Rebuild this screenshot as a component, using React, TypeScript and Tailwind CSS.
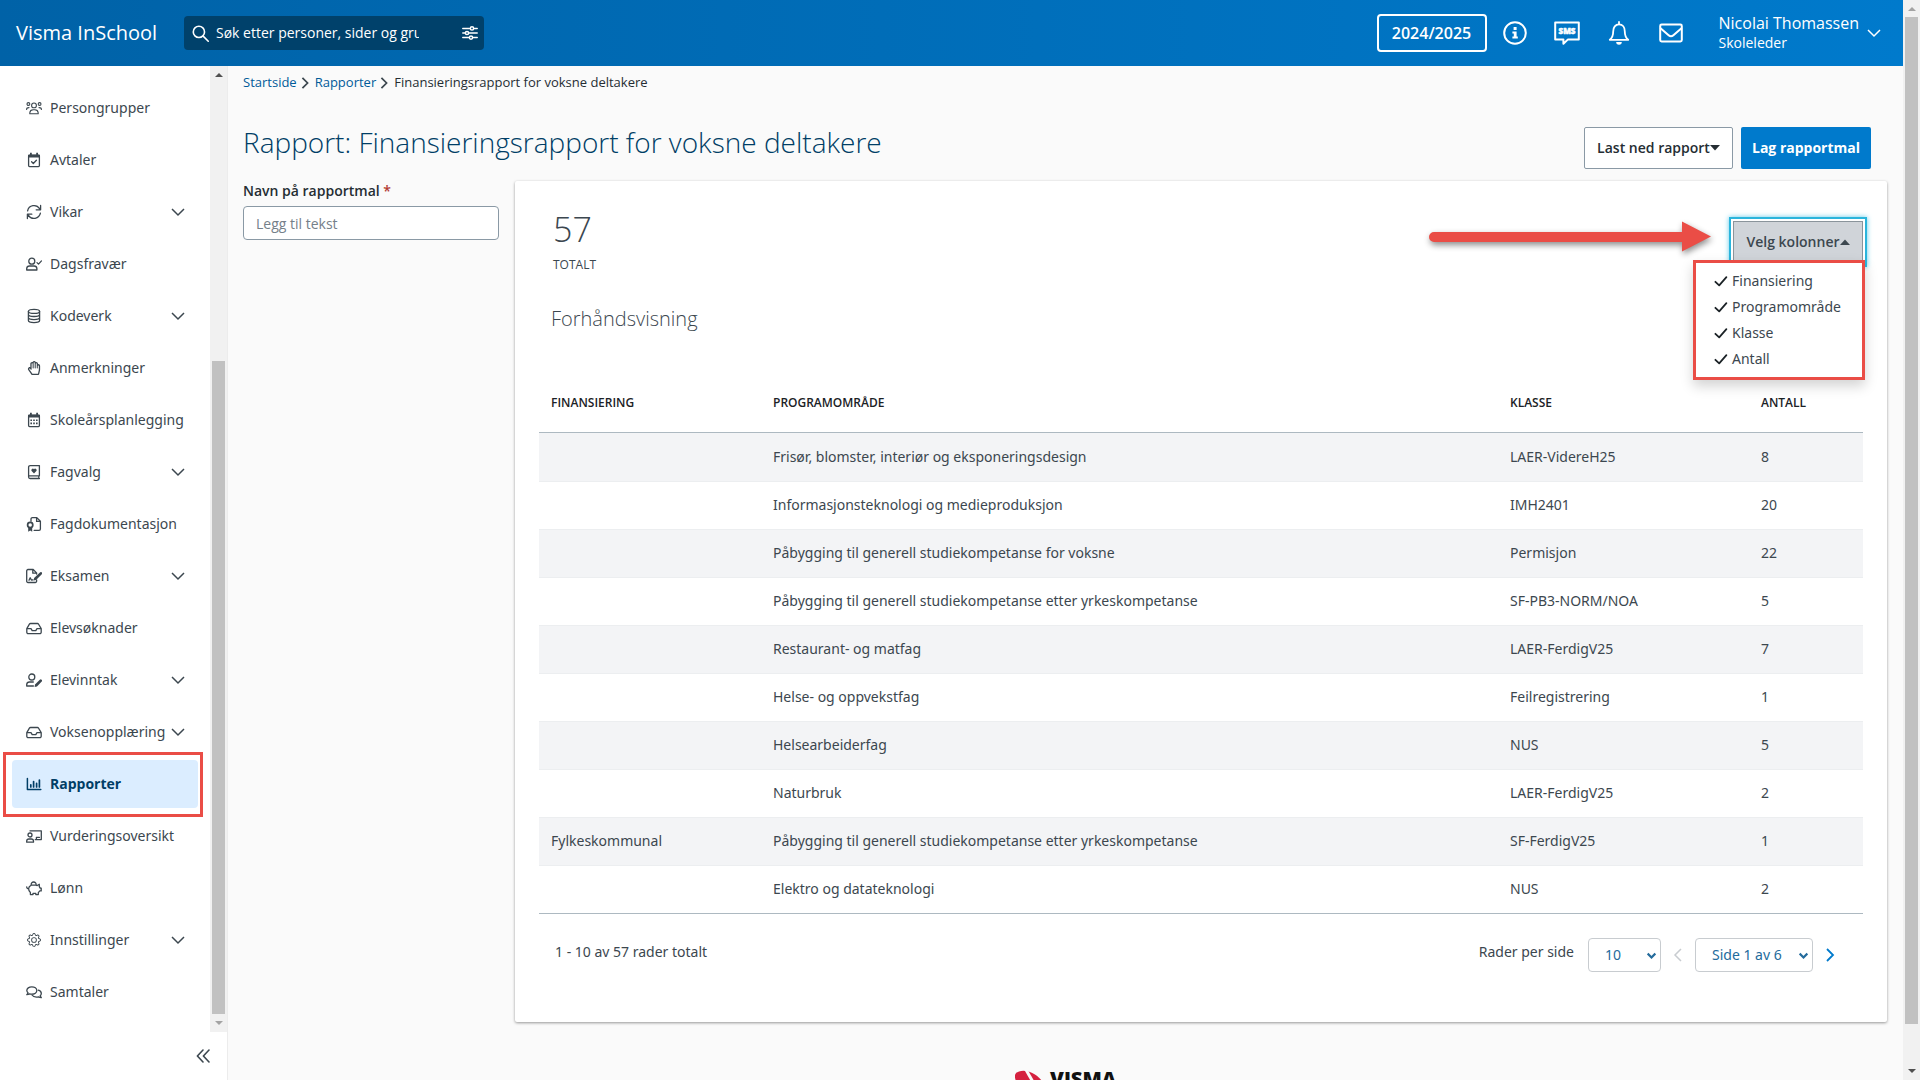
import React, { useState } from 'react';
import { FaRegHandPaper } from 'react-icons/fa';
import { BsGear } from 'react-icons/bs';

type IconProps = { children: React.ReactNode; w?: number; box?: string; sw?: number; className?: string };

function Svg({ children, w = 16, box = '0 0 16 16', sw = 1.3, className = '' }: IconProps) {
  return (
    <svg width={w} height={w} viewBox={box} fill="none" stroke="currentColor" strokeWidth={sw} strokeLinecap="round" strokeLinejoin="round" className={className} aria-hidden="true">
      {children}
    </svg>
  );
}

const Solid = ({ d }: { d: string }) => <path d={d} fill="currentColor" stroke="none" />;

const icons = {
  group: (
    <Svg sw={1.1}>
      <circle cx="8" cy="5.4" r="2.4" /><circle cx="2.4" cy="4" r="1.4" /><circle cx="13.6" cy="4" r="1.4" />
      <path d="M3.8 13.8v-1a3.4 3.4 0 0 1 3.4-3h1.6a3.4 3.4 0 0 1 3.4 3v1zM.6 9.4c0-1.2.6-1.8 2.4-1.8M15.4 9.4c0-1.2-.6-1.8-2.4-1.8" />
    </Svg>
  ),
  appointment: (
    <Svg>
      <rect x="2.6" y="3.2" width="10.8" height="11.4" rx="1" /><Solid d="M2 2.8h12v2.8H2zM4 .8h1.8v2.6H4zM10.2.8H12v2.6h-1.8z" /><path d="M5.6 9.8l1.7 1.7 3.1-3.3" />
    </Svg>
  ),
  sync: (
    <Svg>
      <path d="M1.6 6.8A6.6 6.6 0 0 1 13.6 4.6M14.6 1.4v4.4h-4.4M14.4 9.2A6.6 6.6 0 0 1 2.4 11.4M1.4 14.6v-4.4h4.4" />
    </Svg>
  ),
  userCheck: (
    <Svg>
      <circle cx="5.8" cy="5.2" r="3" /><path d="M.7 14v-1.4a2.8 2.8 0 0 1 2.8-2.6h4.6a2.8 2.8 0 0 1 2.8 2.6V14zM11 6.6l1.5 1.5 3-3.2" />
    </Svg>
  ),
  database: (
    <Svg>
      <ellipse cx="8" cy="3.4" rx="5.6" ry="2" /><path d="M2.4 3.4v9.2c0 1.1 2.5 2 5.6 2s5.6-.9 5.6-2V3.4M2.4 6.5c0 1.1 2.5 2 5.6 2s5.6-.9 5.6-2M2.4 9.6c0 1.1 2.5 2 5.6 2s5.6-.9 5.6-2" />
    </Svg>
  ),
  hand: <FaRegHandPaper size={14} className="mx-px" />,
  calendar: (
    <Svg>
      <rect x="2.6" y="3.2" width="10.8" height="11.4" rx="1" /><Solid d="M2 2.8h12v2.8H2zM4 .8h1.8v2.6H4zM10.2.8H12v2.6h-1.8zM4.4 7.4h1.6V9H4.4zM7.2 7.4h1.6V9H7.2zM10 7.4h1.6V9H10zM4.4 10.6h1.6v1.6H4.4zM7.2 10.6h1.6v1.6H7.2zM10 10.6h1.6v1.6H10z" />
    </Svg>
  ),
  bookHeart: (
    <Svg>
      <path d="M13.4 11.6V1.6H4.2a1.6 1.6 0 0 0-1.6 1.6v9.8a1.5 1.5 0 0 0 1.5 1.5h9.3M2.8 11.8h10.6M12.8 11.8v2.6" /><Solid d="M8 9.4L5.6 7a1.4 1.4 0 0 1 2.4-1.7A1.4 1.4 0 0 1 10.4 7z" />
    </Svg>
  ),
  award: (
    <Svg>
      <path d="M5 5.2V3a1.4 1.4 0 0 1 1.4-1.4h4.4l3.6 3.6V13a1.4 1.4 0 0 1-1.4 1.4H8.2M10.6 1.8v3.6h3.6" /><circle cx="4.2" cy="9" r="2.6" strokeWidth="1.7" /><Solid d="M2.2 11h4v4.800l-2-1.200-2 1.200z" />
    </Svg>
  ),
  exam: (
    <Svg>
      <path d="M10.600 11.800v1.400a1.300 1.300 0 0 1-1.300 1.300H2A1.300 1.300 0 0 1 .7 13.200V2.800A1.300 1.300 0 0 1 2 1.500h5.200l3.400 3.400v1.200M6.800 1.700v3.500h3.600M3 12.200l1.200-2.400 1.200 2.200 1.600-.2" /><Solid d="M7.600 12.600l.5-2.500 5.800-5.700a1.200 1.200 0 0 1 1.900 1.800l-5.800 5.800z" />
    </Svg>
  ),
  inbox: (
    <Svg>
      <path d="M.8 8.600l2.600-4.400a1.400 1.400 0 0 1 1.200-.7h6.800a1.400 1.400 0 0 1 1.200.7l2.600 4.400v3.600a1.400 1.400 0 0 1-1.400 1.400H2.200a1.400 1.400 0 0 1-1.400-1.400zM.9 8.600H5l1.200 2h3.600l1.200-2h4.100" />
    </Svg>
  ),
  userEdit: (
    <Svg>
      <circle cx="5.800" cy="5" r="3" /><path d="M7.400 14H.7v-1.400A2.800 2.800 0 0 1 3.500 10h3.800" /><Solid d="M8.600 15l.4-2.400 4.800-4.800a1.200 1.200 0 0 1 1.900 1.800L11 14.500z" />
    </Svg>
  ),
  chart: (
    <Svg sw={1.5}>
      <path d="M1.400 2.600v11h13.400" /><path d="M4.800 11V8.800M7.600 11V5.600M10.600 11V7.400M13.400 11V4" strokeWidth="1.700" />
    </Svg>
  ),
  teacher: (
    <Svg>
      <circle cx="4" cy="7" r="2" /><path d="M.7 14.200v-1.100a2.200 2.200 0 0 1 2.200-2.100h2.400a2.200 2.200 0 0 1 2.200 2.100v1.100zM4 2.800h11.300v8.800H9.200M10.400 11.400v-2h3" />
    </Svg>
  ),
  piggy: (
    <Svg>
      <path d="M5 5.200h4.800l1.400.3 2.100-1.200v2.300l.9 1.500h1v2.800h-1.400l-1.500 1.700v2H9.800v-1.300H7v1.300H4.400v-2.200A4.600 4.600 0 0 1 2.600 8.600C1.400 8.600.7 8 .7 6.800M2.700 8.400A3.600 3.600 0 0 1 5 5.300M5.200 5a2.500 2.500 0 1 1 4.900 0" />
    </Svg>
  ),
  gear: <BsGear size={14} className="mx-px" />,
  chats: (
    <Svg>
      <path d="M5.800 2.800c2.800 0 5 1.600 5 3.700s-2.200 3.700-5 3.700c-.8 0-1.500-.1-2.100-.4-.7.500-1.700.9-2.900.9.600-.6 1-1.300 1.200-2A3.300 3.300 0 0 1 .8 6.500c0-2.100 2.200-3.700 5-3.700z" /><path d="M12.300 6.200c1.800.5 3 1.700 3 3.200 0 .9-.4 1.700-1.100 2.300.2.800.6 1.400 1.100 2-1.200 0-2.200-.4-2.900-.9-.6.200-1.300.3-2 .3-2 0-3.600-.8-4.400-2.100" />
    </Svg>
  ),
};

const menu: { label: string; icon: keyof typeof icons; sub?: boolean; active?: boolean }[] = [
  { label: 'Persongrupper', icon: 'group' },
  { label: 'Avtaler', icon: 'appointment' },
  { label: 'Vikar', icon: 'sync', sub: true },
  { label: 'Dagsfravær', icon: 'userCheck' },
  { label: 'Kodeverk', icon: 'database', sub: true },
  { label: 'Anmerkninger', icon: 'hand' },
  { label: 'Skoleårsplanlegging', icon: 'calendar' },
  { label: 'Fagvalg', icon: 'bookHeart', sub: true },
  { label: 'Fagdokumentasjon', icon: 'award' },
  { label: 'Eksamen', icon: 'exam', sub: true },
  { label: 'Elevsøknader', icon: 'inbox' },
  { label: 'Elevinntak', icon: 'userEdit', sub: true },
  { label: 'Voksenopplæring', icon: 'inbox', sub: true },
  { label: 'Rapporter', icon: 'chart', active: true },
  { label: 'Vurderingsoversikt', icon: 'teacher' },
  { label: 'Lønn', icon: 'piggy' },
  { label: 'Innstillinger', icon: 'gear', sub: true },
  { label: 'Samtaler', icon: 'chats' },
];

const rows = [
  ['', 'Frisør, blomster, interiør og eksponeringsdesign', 'LAER-VidereH25', '8'],
  ['', 'Informasjonsteknologi og medieproduksjon', 'IMH2401', '20'],
  ['', 'Påbygging til generell studiekompetanse for voksne', 'Permisjon', '22'],
  ['', 'Påbygging til generell studiekompetanse etter yrkeskompetanse', 'SF-PB3-NORM/NOA', '5'],
  ['', 'Restaurant- og matfag', 'LAER-FerdigV25', '7'],
  ['', 'Helse- og oppvekstfag', 'Feilregistrering', '1'],
  ['', 'Helsearbeiderfag', 'NUS', '5'],
  ['', 'Naturbruk', 'LAER-FerdigV25', '2'],
  ['Fylkeskommunal', 'Påbygging til generell studiekompetanse etter yrkeskompetanse', 'SF-FerdigV25', '1'],
  ['', 'Elektro og datateknologi', 'NUS', '2'],
];

const Chevron = ({ d, size = 14, sw = 1.5, className = '' }: { d: string; size?: number; sw?: number; className?: string }) => (
  <svg width={size} height={size} viewBox="0 0 14 14" fill="none" stroke="currentColor" strokeWidth={sw} className={className} aria-hidden="true">
    <path d={d} />
  </svg>
);
const DOWN = 'M1 4l6 6 6-6';
const RIGHT = 'M4 1l6 6-6 6';
const LEFT = 'M10 1L4 7l6 6';

const Caret = ({ up }: { up?: boolean }) => (
  <svg width="10" height="6" viewBox="0 0 10 6" aria-hidden="true">
    <path d={up ? 'M0 6l5-5.500L10 6z' : 'M0 0h10L5 5.500z'} fill="currentColor" />
  </svg>
);

const ScrollArrow = ({ up, className }: { up?: boolean; className: string }) => (
  <svg width="8" height="4" viewBox="0 0 8 4" className={className} aria-hidden="true">
    <path d={up ? 'M0 4l4-4 4 4z' : 'M0 0l4 4 4-4z'} fill="currentColor" />
  </svg>
);

function Header() {
  return (
    <header className="flex h-[66px] shrink-0 items-center bg-linear-to-r from-[#0062a7] to-[#007acc] pr-[22px] pl-4 text-white">
      <a href="#" className="w-42 text-xl">Visma InSchool</a>
      <div className="flex h-[34px] w-[300px] items-center rounded bg-[#00416b] pr-1.5 pl-2">
        <Svg w={17} sw={1.5}><circle cx="6.500" cy="6.500" r="5.300" /><path d="M10.500 10.500l4.800 4.800" /></Svg>
        <input aria-label="Søk" placeholder="Søk etter personer, sider og grupper" className="ml-[7px] w-[203px] bg-transparent text-sm text-white outline-none placeholder:text-white" />
        <button aria-label="Filter" className="ml-auto">
          <Svg w={16} sw={1.500}>
            <path d="M.8 3.400H8M12 3.400h3.200M.8 8H3M7 8h8.200M.8 12.600H7M11 12.600h4.200" />
            <circle cx="10" cy="3.400" r="1.600" /><circle cx="5" cy="8" r="1.600" /><circle cx="9" cy="12.600" r="1.600" />
          </Svg>
        </button>
      </div>
      <div className="ml-auto flex items-center">
        <button className="h-[38px] w-[110px] rounded border-2 border-white text-base font-semibold">2024/2025</button>
        <div className="ml-4 flex items-center gap-7">
          <button aria-label="Informasjon">
            <Svg w={24} box="0 0 24 24" sw={2}>
              <circle cx="12" cy="12" r="10.800" />
              <Solid d="M10.600 6h3v3h-3zM9.400 10.400h4.200v5.200h1.200v2H9.400v-2h1.400v-3.200H9.400z" />
            </Svg>
          </button>
          <button aria-label="SMS">
            <svg width="26" height="24" viewBox="0 0 26 24" fill="none" stroke="currentColor" strokeWidth="2" strokeLinejoin="round" aria-hidden="true" className="-mx-px">
              <path d="M1.200 1.400h23.600v17H14L9.400 22.800v-4.400H1.200z" />
              <text x="13" y="13" textAnchor="middle" fontFamily="Open Sans" fontWeight="800" fontSize="8" fill="currentColor" stroke="currentColor" strokeWidth="0.500">SMS</text>
            </svg>
          </button>
          <button aria-label="Varsler">
            <Svg w={24} box="0 0 24 24" sw={1.800}><path d="M2.800 18.800c2.400-2 3.400-4 3.400-8.400 0-4 2.200-7 5.800-7s5.800 3 5.800 7c0 4.400 1 6.400 3.400 8.400zM12 1v2" /><Solid d="M9.200 21h5.600a2.800 2.800 0 0 1-5.600 0z" /></Svg>
          </button>
          <button aria-label="Meldinger">
            <Svg w={24} box="0 0 24 24" sw={2}><rect x="1.200" y="3.600" width="21.600" height="16.800" rx="1.400" /><path d="M1.800 7.400l7.800 6.800a3.600 3.600 0 0 0 4.800 0l7.800-6.800" /></Svg>
          </button>
        </div>
        <button className="ml-9 flex items-center gap-2 text-left">
          <span>
            <span className="block text-base leading-5">Nicolai Thomassen</span>
            <span className="block text-sm leading-5">Skoleleder</span>
          </span>
          <Chevron d={DOWN} />
        </button>
      </div>
    </header>
  );
}

function Sidebar() {
  return (
    <aside className="flex w-[228px] shrink-0 flex-col border-r border-[#ececec] bg-white">
      <div className="flex min-h-0 flex-1">
        <nav className="flex-1 px-3 pt-[18px] text-[#3c474f]">
          <ul className="flex flex-col gap-1">
            {menu.map((m) => (
              <li key={m.label} className="relative">
                <a
                  href="#"
                  className={
                    m.active
                      ? 'flex h-12 w-[186px] items-center rounded bg-[#dbedff] pr-[13px] pl-3.5 text-sm font-bold text-[#003e66]'
                      : "flex h-12 w-[186px] items-center pr-[13px] pl-3.5 font-['Noto_Sans',sans-serif] text-sm"
                  }
                >
                  <span className="mr-2 w-4 shrink-0">{icons[m.icon]}</span>
                  <span className="whitespace-nowrap">{m.label}</span>
                  {m.sub && <Chevron d={DOWN} className="ml-auto shrink-0" />}
                </a>
                {m.active && <div className="pointer-events-none absolute -top-2 -left-[9px] h-[65px] w-[200px] border-3 border-[#ea4d46]" />}
              </li>
            ))}
          </ul>
        </nav>
        <div className="flex w-[17px] flex-col items-center bg-[#f1f1f1]">
          <ScrollArrow up className="mt-[7px] shrink-0 text-[#505050]" />
          <div className="mt-[284px] w-[13px] flex-1 bg-[#c1c1c1]" />
          <ScrollArrow className="my-[7px] shrink-0 text-[#a3a3a3]" />
        </div>
      </div>
      <div className="flex h-12 items-center justify-end pr-[17px] text-[#3c474f]">
        <button aria-label="Skjul meny">
          <Svg w={14} box="0 0 14 14" sw={1.600}><path d="M7 1L1.400 7 7 13M13 1L7.400 7 13 13" /></Svg>
        </button>
      </div>
    </aside>
  );
}

function ColumnPicker() {
  const [open, setOpen] = useState(true);
  return (
    <div className="relative">
      <button onClick={() => setOpen(!open)} className="flex h-[42px] w-[130px] items-center justify-center border border-[#8a949b] bg-[#d0d4d9] text-sm font-semibold text-[#3c474f] shadow-[0_0_0_2px_#fff,0_0_0_4px_#2bb5dc,0_0_5px_4px_#5fc9e8]">
        Velg kolonner<Caret up />
      </button>
      {open && (
        <ul className="absolute top-[39px] -right-0.5 z-10 w-[172px] border-3 border-[#ea4d46] bg-white py-[5px] pl-[18px] font-['Noto_Sans',sans-serif] text-sm text-[#3c474f] shadow-[0_6px_12px_rgba(0,0,0,0.175)]">
          {['Finansiering', 'Programområde', 'Klasse', 'Antall'].map((c) => (
            <li key={c}>
              <button className="flex h-[26px] items-center gap-1">
                <Svg w={14} box="0 0 14 14" sw={1.800} className="text-[#1b2226]"><path d="M1.400 7.800l3.800 3.600 7.200-8.200" /></Svg>
                {c}
              </button>
            </li>
          ))}
        </ul>
      )}
      <svg width="290" height="44" viewBox="0 0 290 44" className="pointer-events-none absolute top-[-4px] right-[152px] overflow-visible drop-shadow-[1px_3px_3px_rgba(0,0,0,0.45)]" aria-hidden="true">
        <path d="M13 15H261V4.500L290 19.500 261 34.500V25H13a5 5 0 0 1 0-10z" fill="#ea4d46" />
      </svg>
    </div>
  );
}

function Pagination() {
  return (
    <div className="mt-6 flex items-start pr-[26px] pl-4 font-['Noto_Sans',sans-serif] text-sm text-[#3c474f]">
      <p className="pt-1">1 - 10 av 57 rader totalt</p>
      <div className="ml-auto flex items-center">
        <label htmlFor="per-page" className="mr-3.5 -mt-1.5">Rader per side</label>
        <div className="relative">
          <select id="per-page" className="h-[34px] w-[73px] appearance-none rounded border border-[#c8ccd0] bg-white pl-4 text-sm text-[#246b9c]"><option>10</option></select>
          <Chevron d={DOWN} size={9} sw={3.500} className="pointer-events-none absolute top-[13px] right-[5px] text-[#246b9c]" />
        </div>
        <button aria-label="Forrige side" disabled className="px-2.5 text-[#c8ccd0]"><Chevron d={LEFT} /></button>
        <div className="relative">
          <select aria-label="Side" className="h-[34px] w-[118px] appearance-none rounded border border-[#c8ccd0] bg-white pl-4 text-sm text-[#246b9c]"><option>Side 1 av 6</option></select>
          <Chevron d={DOWN} size={9} sw={3.500} className="pointer-events-none absolute top-[13px] right-[5px] text-[#246b9c]" />
        </div>
        <button aria-label="Neste side" className="pl-2.5 text-[#007acc]"><Chevron d={RIGHT} sw={1.800} /></button>
      </div>
    </div>
  );
}

const columns = [
  { name: 'Finansiering', width: 'w-[222px]' },
  { name: 'Programområde', width: '' },
  { name: 'Klasse', width: 'w-[251px]' },
  { name: 'Antall', width: 'w-[114px]' },
];

export default function App() {
  return (
    <div className="flex h-screen overflow-hidden bg-[#fafafa] font-['Open_Sans',sans-serif] text-[#3c474f]">
      <div className="flex min-w-0 flex-1 flex-col">
        <Header />
        <div className="flex min-h-0 flex-1">
          <Sidebar />
          <main className="min-w-0 flex-1 pr-4 pl-[15px]">
            <nav aria-label="Brødsmuler" className="flex h-[34px] items-center text-[13px]">
              <a href="#" className="text-[#005b99]">Startside</a>
              <Chevron d={RIGHT} size={12} sw={2} className="mr-1 ml-0.5" />
              <a href="#" className="text-[#005b99]">Rapporter</a>
              <Chevron d={RIGHT} size={12} sw={2} className="mr-1 ml-0.5" />
              <span className="text-[#252d33]">Finansieringsrapport for voksne deltakere</span>
            </nav>
            <div className="mt-[27px] flex h-[42px] items-center justify-between pr-4">
              <h1 className="pb-3 text-[28px] font-light text-[#003e66]">Rapport: Finansieringsrapport for voksne deltakere</h1>
              <div className="flex gap-2 text-sm font-semibold">
                <button className="flex h-[42px] w-[149px] items-center justify-center rounded-xs border border-[#8a99a5] bg-white text-[#252d33]">Last ned rapport<Caret /></button>
                <button className="h-[42px] w-[130px] rounded-xs bg-[#007acc] font-bold text-white">Lag rapportmal</button>
              </div>
            </div>
            <div className="mt-3 flex items-start gap-4">
              <div className="flex w-64 shrink-0 flex-col gap-[5px]">
                <label htmlFor="template-name" className="text-sm font-semibold text-[#252d33]">Navn på rapportmal <span className="text-[#b33a32]">*</span></label>
                <input id="template-name" placeholder="Legg til tekst" className="h-[34px] rounded border border-[#8a99a5] bg-white px-3 text-sm placeholder:text-[#75808a]" />
              </div>
              <section className="min-w-0 flex-1 rounded-xs bg-white px-6 pb-[50px] shadow-[0_1px_3px_rgba(0,0,0,0.4)]">
                <div className="flex items-start justify-between pt-[26px]">
                  <div className="pl-3.5">
                    <p className="text-[34px] leading-[44px] font-light">57</p>
                    <p className="mt-1.5 text-xs leading-4">TOTALT</p>
                  </div>
                  <div className="pt-3.5"><ColumnPicker /></div>
                </div>
                <h2 className="mt-[31px] pl-3 text-xl leading-[30px] font-light">Forhåndsvisning</h2>
                <table className="mt-[39px] w-full table-fixed border-collapse border-b border-[#adb9c1] text-left text-sm">
                  <thead>
                    <tr className="h-[59px] border-b border-[#adb9c1]">
                      {columns.map((c) => <th key={c.name} className={`${c.width} pt-0.5 pl-3 text-xs font-semibold text-[#1b2226] uppercase`}>{c.name}</th>)}
                    </tr>
                  </thead>
                  <tbody className="font-['Noto_Sans',sans-serif]">
                    {rows.map((r, i) => (
                      <tr key={i} className="h-12 border-b border-[#eceef0] first:h-[49px] last:border-b-0 odd:bg-[#f3f4f6]">
                        {r.map((c, j) => <td key={j} className="pl-3">{c}</td>)}
                      </tr>
                    ))}
                  </tbody>
                </table>
                <Pagination />
              </section>
            </div>
            <footer className="mt-12 flex justify-center pl-2.5">
              <svg width="110" height="24" viewBox="0 0 110 24" aria-label="Visma" role="img">
                <path d="M0 5C2-1 17-2 27 11V24H12C4 18-1 10 0 5z" fill="#d5213f" />
                <path d="M10-2l8 14" stroke="#fafafa" strokeWidth="3" />
                <text x="35" y="16" fontFamily="Open Sans" fontWeight="800" fontSize="20" fill="#111">VISMA</text>
              </svg>
            </footer>
          </main>
        </div>
      </div>
      <div className="flex w-[17px] shrink-0 flex-col items-center bg-[#f1f1f1]">
        <ScrollArrow up className="mt-[7px] shrink-0 text-[#a3a3a3]" />
        <div className="mt-1.5 mb-[45px] w-[13px] flex-1 bg-[#c1c1c1]" />
        <ScrollArrow className="mb-[7px] shrink-0 text-[#505050]" />
      </div>
    </div>
  );
}
